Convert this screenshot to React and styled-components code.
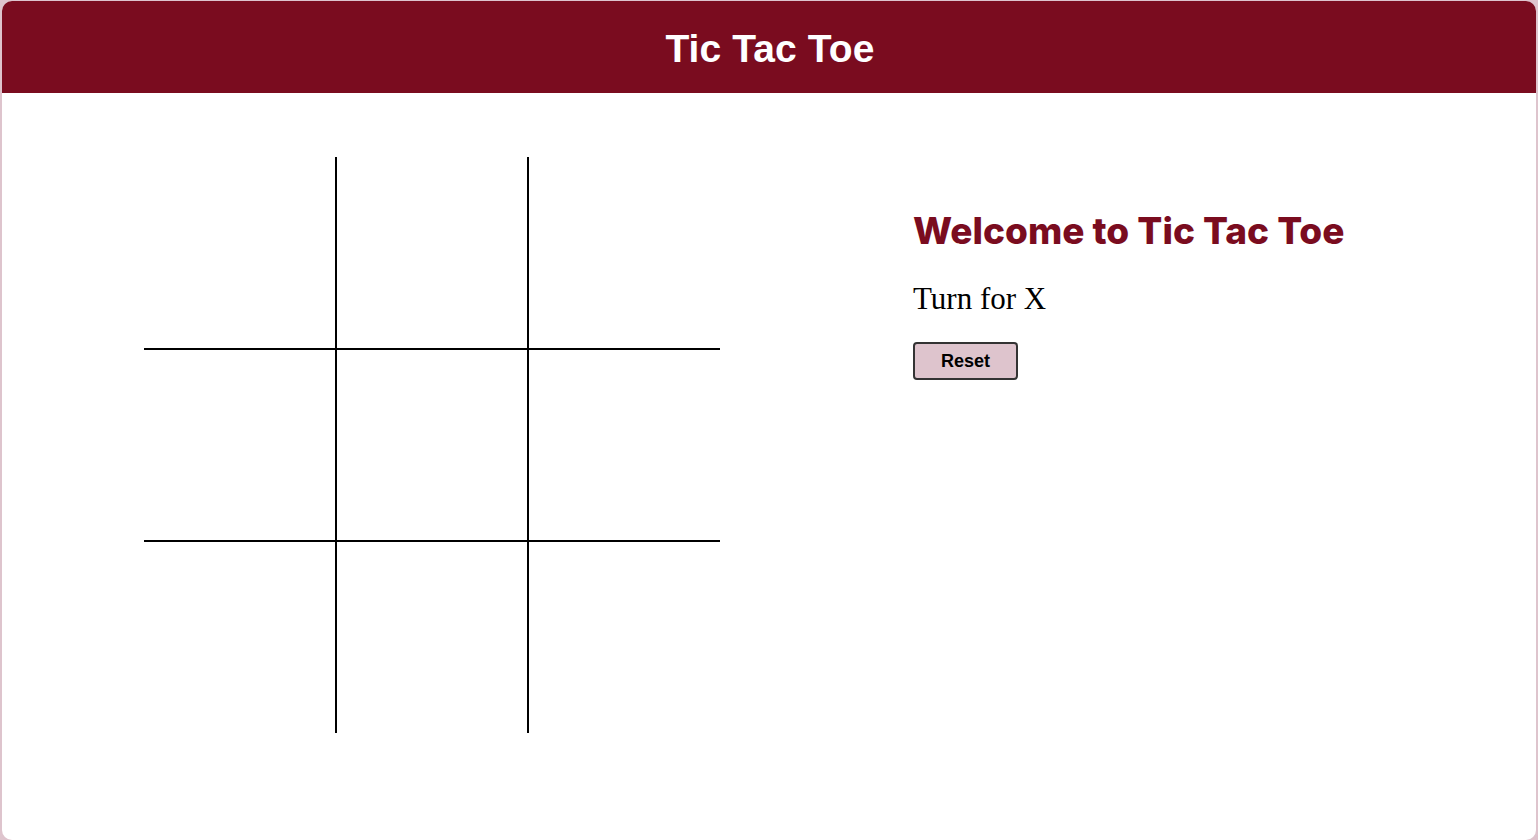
import React, { useState } from "react";
import styled, { createGlobalStyle } from "styled-components";

const Global = createGlobalStyle`
  html, body { margin: 0; padding: 0; background: #dec4cd; }
  body { font-family: "Liberation Serif", "Times New Roman", serif; }
`;

const Page = styled.div`
  padding: 1px 2px 0 2px;
  height: 840px;
  box-sizing: border-box;
`;

const Card = styled.div`
  background: #ffffff;
  border-radius: 10px;
  height: 839px;
  overflow: hidden;
  display: flex;
  flex-direction: column;
`;

const Header = styled.header`
  background: #7a0c1f;
  height: 92px;
  display: flex;
  align-items: center;
  justify-content: center;
`;

const Title = styled.h1`
  margin: 0;
  color: #ffffff;
  font-family: "Liberation Sans", Arial, sans-serif;
  font-weight: 700;
  font-size: 39px;
  line-height: 1;
  letter-spacing: 0.1px;
  transform: translate(1px, 1px);
`;

const Main = styled.main`
  display: flex;
  padding: 64px 0 0 142px;
  gap: 193px;
`;

const Board = styled.div`
  display: grid;
  grid-template-columns: 193px 192px 191px;
  grid-template-rows: 193px 192px 191px;
`;

const Cell = styled.button`
  all: unset;
  box-sizing: border-box;
  display: flex;
  align-items: center;
  justify-content: center;
  font-family: "Liberation Sans", Arial, sans-serif;
  font-size: 96px;
  font-weight: 700;
  color: #7a0c1f;
  cursor: pointer;
  border-right: ${(p) => (p.$col < 2 ? "2px solid #000" : "none")};
  border-bottom: ${(p) => (p.$row < 2 ? "2px solid #000" : "none")};
`;

const Side = styled.section`
  padding-top: 51px;
  display: flex;
  flex-direction: column;
  align-items: flex-start;
`;

const Welcome = styled.h2`
  margin: 0;
  color: #7a0c1f;
  font-family: Inter, Lato, sans-serif;
  font-weight: 800;
  font-size: 37px;
  line-height: 46px;
  letter-spacing: 0px;
`;

const Turn = styled.p`
  margin: 27px 0 0 0;
  font-family: "Liberation Serif", "Times New Roman", serif;
  font-size: 31px;
  line-height: 36px;
  color: #000;
`;

const ResetButton = styled.button`
  margin-top: 25px;
  width: 105px;
  height: 38px;
  background: #dec4cd;
  border: 2px solid #333;
  border-radius: 4px;
  font-family: "Liberation Sans", Arial, sans-serif;
  font-weight: 700;
  font-size: 18px;
  color: #000;
  cursor: pointer;
  padding: 0;
`;

export default function App() {
  const [cells, setCells] = useState(Array(9).fill(""));
  const [turn, setTurn] = useState("X");

  const play = (i) => {
    if (cells[i]) return;
    const next = cells.slice();
    next[i] = turn;
    setCells(next);
    setTurn(turn === "X" ? "O" : "X");
  };

  return (
    <Page>
      <Global />
      <Card>
        <Header>
          <Title>Tic Tac Toe</Title>
        </Header>
        <Main>
          <Board>
            {cells.map((v, i) => (
              <Cell key={i} $row={Math.floor(i / 3)} $col={i % 3} onClick={() => play(i)}>
                {v}
              </Cell>
            ))}
          </Board>
          <Side>
            <Welcome>Welcome to Tic Tac Toe</Welcome>
            <Turn>Turn for {turn}</Turn>
            <ResetButton
              onClick={() => {
                setCells(Array(9).fill(""));
                setTurn("X");
              }}
            >
              Reset
            </ResetButton>
          </Side>
        </Main>
      </Card>
    </Page>
  );
}
